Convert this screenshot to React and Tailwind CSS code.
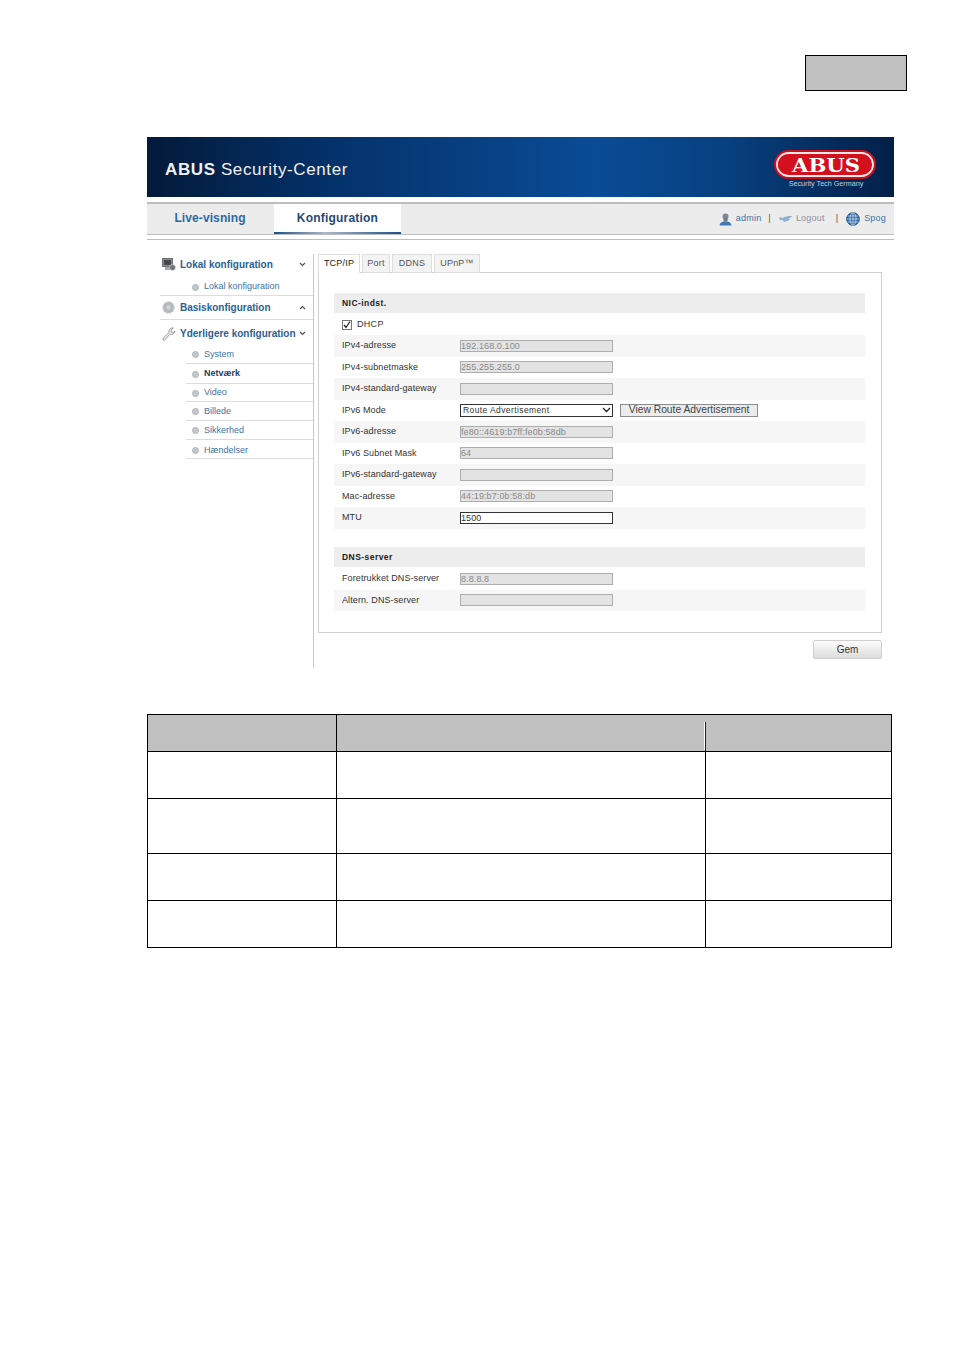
import React from "react";

const Bullet = () => (
  <span className="w-[7px] h-[7px] rounded-full bg-[#c4c8cc] border border-[#aeb3b8] shrink-0" />
);

const Chevron = ({ up }) => (
  <svg width="7" height="5" viewBox="0 0 7 5" className="shrink-0">
    <path d={up ? "M1 4 L3.5 1.5 L6 4" : "M1 1 L3.5 3.5 L6 1"} fill="none" stroke="#555" strokeWidth="1.2" />
  </svg>
);

const MonitorIcon = () => (
  <svg width="14" height="13" viewBox="0 0 14 13" className="shrink-0">
    <rect x="0.5" y="0.5" width="10" height="8" fill="#8a8f96" stroke="#6a6e73" />
    <rect x="2" y="2" width="7" height="5" fill="#45494d" />
    <rect x="3" y="9" width="6" height="3" fill="#a5a9ae" />
    <circle cx="10.5" cy="9.5" r="3" fill="#70767c" stroke="#e6e6e6" strokeWidth="0.6" />
  </svg>
);

const GearIcon = () => (
  <svg width="13" height="13" viewBox="0 0 13 13" className="shrink-0">
    <circle cx="6.5" cy="6.5" r="5.6" fill="#b4b7ba" stroke="#c8cacc" strokeDasharray="2 1" strokeWidth="1.4" />
    <circle cx="6.5" cy="6.5" r="2.4" fill="#cfd1d3" />
  </svg>
);

const WrenchIcon = () => (
  <svg width="14" height="14" viewBox="0 0 14 14" className="shrink-0">
    <path
      d="M1 13 L2.5 13.2 L8 7.2 C10 8 12.6 6.8 13 4 L11 5.6 L9 4.6 L9.4 2.4 L11.4 1 C8.6 0.4 6.4 3 7 5.6 L1 11.4 Z"
      fill="#f0f0f0"
      stroke="#8d9094"
      strokeWidth="0.9"
    />
  </svg>
);

const UserIcon = () => (
  <svg width="13" height="13" viewBox="0 0 13 13" className="shrink-0">
    <circle cx="6.5" cy="3.5" r="3" fill="#7b8794" />
    <rect x="4.5" y="5.5" width="4" height="3" fill="#6b7683" />
    <path d="M0.5 12.5 C1 9 3.5 8.5 6.5 8.5 C9.5 8.5 12 9 12.5 12.5 Z" fill="#3f78b5" />
  </svg>
);

const LogoutIcon = () => (
  <svg width="14" height="8" viewBox="0 0 14 8" className="shrink-0">
    <path d="M0.5 2 L4 3 C6 1.5 8 1 13.5 1 L10 3.5 L11 5 L5 7 L3.5 5 L0.5 5 Z" fill="#8fb0d2" />
  </svg>
);

const GlobeIcon = () => (
  <svg width="14" height="14" viewBox="0 0 14 14" className="shrink-0">
    <circle cx="7" cy="7" r="6.3" fill="#2f68a8" stroke="#1d4a80" />
    <ellipse cx="7" cy="7" rx="3" ry="6.3" fill="none" stroke="#d4e2f0" strokeWidth="0.7" />
    <path d="M0.7 7 H13.3 M1.6 4 H12.4 M1.6 10 H12.4 M7 0.7 V13.3" stroke="#d4e2f0" strokeWidth="0.7" />
  </svg>
);

const AbusLogo = () => (
  <svg width="106" height="42" viewBox="0 0 106 42" className="block">
    <rect x="1" y="4" width="102" height="29" rx="14.5" fill="#c8101d" />
    <rect x="4" y="7" width="96" height="23" rx="11.5" fill="#d3111e" stroke="#f6e9e9" strokeWidth="1.8" />
    <text
      x="53"
      y="26"
      textAnchor="middle"
      fontFamily="'DejaVu Serif', serif"
      fontWeight="700"
      fontSize="19"
      fill="#fff"
      textLength="68"
      lengthAdjust="spacingAndGlyphs"
    >
      ABUS
    </text>
    <text x="53" y="39.5" textAnchor="middle" fontFamily="'Liberation Sans', sans-serif" fontSize="7.2" fill="#c5cdd8">
      Security Tech Germany
    </text>
  </svg>
);

const Side = ({ icon, label, up }) => (
  <div className="flex items-center h-full pl-[15px] pr-[7px]">
    <span className="w-[18px] flex justify-start shrink-0">{icon}</span>
    <span className="flex-1 text-[10px] font-bold text-[#2c5f94] whitespace-nowrap">{label}</span>
    <Chevron up={up} />
  </div>
);

const SubItem = ({ label, bold, line = true, h = "h-[19px]", pt = "pt-px" }) => (
  <div className={`ml-[39px] ${h} ${pt} flex items-center gap-[5px] pl-[6px] ${line ? "border-b border-[#dcdcdc]" : ""}`}>
    <Bullet />
    <span className={`text-[9px] ${bold ? "font-bold text-[#1e3f66]" : "text-[#3f72a8]"}`}>{label}</span>
  </div>
);

const Sidebar = () => (
  <div className="w-[167px] h-[414px] border-r border-[#c8c8c8] shrink-0">
    <div className="h-[22px] pb-[2px]">
      <Side icon={<MonitorIcon />} label="Lokal konfiguration" />
    </div>
    <SubItem label="Lokal konfiguration" line={false} pt="pt-[3px]" />
    <div className="ml-[13px] h-[25px] border-t border-b border-[#dcdcdc]">
      <div className="-ml-[13px] h-full">
        <Side icon={<GearIcon />} label="Basiskonfiguration" up />
      </div>
    </div>
    <div className="h-[25px] pt-[2px]">
      <Side icon={<WrenchIcon />} label="Yderligere konfiguration" />
    </div>
    <SubItem label="System" />
    <SubItem label="Netværk" bold h="h-[20px]" />
    <SubItem label="Video" h="h-[18px]" />
    <SubItem label="Billede" />
    <SubItem label="Sikkerhed" />
    <SubItem label="Hændelser" pt="pt-[3px]" />
  </div>
);

const Tab = ({ label, active, width }) => (
  <div
    className={`h-[19px] flex items-center justify-center text-[9px] tracking-[0.2px] border border-[#dedede] ${width} ${
      active ? "bg-white border-b-white text-[#222] relative z-10" : "bg-[#f3f3f3] text-[#555]"
    }`}
  >
    {label}
  </div>
);

const Field = ({ value = "" }) => (
  <input
    readOnly
    value={value}
    className="w-[153px] h-[12px] bg-[#e3e3e3] border border-[#adadad] pl-0 text-[9px] tracking-[0.1px] text-[#8a8a8a] leading-none outline-none"
  />
);

const Row = ({ label, gray, children }) => (
  <div className={`h-[21.5px] flex items-center pl-2 ${gray ? "bg-[#f6f6f6]" : ""}`}>
    <span className="w-[118px] text-[9px] tracking-[0.1px] text-[#333] whitespace-nowrap">{label}</span>
    {children}
  </div>
);

const SectionHead = ({ label }) => (
  <div className="h-[20px] bg-[#ededed] flex items-center pl-2 text-[8.5px] font-bold tracking-[0.45px] text-[#222]">{label}</div>
);

const Panel = () => (
  <div className="h-[361px] border border-[#cfcfcf] pt-[20px] pl-[15px] pr-[16px]">
    <SectionHead label="NIC-indst." />
    <div className="h-[22px] flex items-center pl-2 pt-[2px] gap-[5px] text-[9px] tracking-[0.3px] text-[#333]">
      <span className="w-[10px] h-[10px] border border-[#777] bg-white flex items-center justify-center">
        <svg width="8" height="8" viewBox="0 0 8 8">
          <path d="M1 4 L3 6.5 L7 0.5" fill="none" stroke="#222" strokeWidth="1.3" />
        </svg>
      </span>
      DHCP
    </div>
    <Row label="IPv4-adresse" gray><Field value="192.168.0.100" /></Row>
    <Row label="IPv4-subnetmaske"><Field value="255.255.255.0" /></Row>
    <Row label="IPv4-standard-gateway" gray><Field /></Row>
    <Row label="IPv6 Mode">
      <div className="w-[153px] h-[13px] border border-[#333] bg-white flex items-center justify-between pl-[2px] pr-[1px] text-[8.5px] tracking-[0.4px] text-[#333]">
        Route Advertisement
        <svg width="9" height="6" viewBox="0 0 9 6">
          <path d="M1 1 L4.5 4.5 L8 1" fill="none" stroke="#222" strokeWidth="1.3" />
        </svg>
      </div>
      <button className="ml-[7px] w-[138px] h-[13px] bg-[#ececec] border border-[#8c8c8c] text-[10.3px] leading-none text-[#444]">
        View Route Advertisement
      </button>
    </Row>
    <Row label="IPv6-adresse" gray><Field value="fe80::4619:b7ff:fe0b:58db" /></Row>
    <Row label="IPv6 Subnet Mask"><Field value="64" /></Row>
    <Row label="IPv6-standard-gateway" gray><Field /></Row>
    <Row label="Mac-adresse"><Field value="44:19:b7:0b:58:db" /></Row>
    <Row label="MTU" gray>
      <input
        readOnly
        value="1500"
        className="w-[153px] h-[12px] bg-white border border-[#333] pl-0 text-[9px] tracking-[0.1px] text-[#333] leading-none outline-none"
      />
    </Row>
    <div className="h-[18.5px]" />
    <SectionHead label="DNS-server" />
    <div className="h-px" />
    <Row label="Foretrukket DNS-server"><Field value="8.8.8.8" /></Row>
    <Row label="Altern. DNS-server" gray><Field /></Row>
  </div>
);

const Cell = ({ w, last, head }) => (
  <div className={`${w} ${last ? "" : "border-r border-black"} ${head ? "bg-[#c0c0c0]" : ""} shrink-0 h-full`} />
);

const TableRow = ({ h, head, last }) => (
  <div className={`flex ${h} ${last ? "" : "border-b border-black"}`}>
    <Cell w="w-[189px]" head={head} />
    {head ? (
      <div className="w-[369px] shrink-0 h-full bg-[#c0c0c0] relative">
        {/* the broken column rule in the header */}
        <span className="absolute right-px top-[7px] bottom-[1px] w-px bg-white" />
        <span className="absolute right-0 top-[7px] bottom-0 w-px bg-[#222]" />
      </div>
    ) : (
      <Cell w="w-[369px]" />
    )}
    <Cell w="flex-1" last head={head} />
  </div>
);

export default function App() {
  return (
    <div className="w-[955px] h-[1350px] bg-white relative font-['Liberation_Sans',Arial,sans-serif] overflow-hidden">
      <div className="pt-[55px] pl-[805px]">
        <div className="w-[102px] h-[36px] bg-[#c0c0c0] border border-black" />
      </div>

      <div className="ml-[147px] mt-[46px] w-[747px]">
        <div className="h-[60px] flex items-center justify-between pl-[18px] pr-[15px] bg-[linear-gradient(90deg,#031a3a_0%,#04326b_25%,#0a4c96_60%,#07407f_78%,#031f47_100%)]">
          <div className="text-[17px] text-[#f0f0f0] tracking-[0.6px] mt-[5px]">
            <span className="font-bold">ABUS</span> Security-Center
          </div>
          <AbusLogo />
        </div>

        <div className="mt-[5px] h-[33px] border-t-2 border-b border-[#bdbdbd] bg-[#ececec] flex items-stretch">
          <div className="w-[127px] flex items-center justify-center pb-[2px] pr-px text-[12px] font-bold text-[#2c6aa6] tracking-[0.1px]">Live-visning</div>
          <div className="w-[127px] bg-white relative flex items-center justify-center pb-[2px] text-[12px] font-bold text-[#1f4a78] tracking-[0.2px]">
            Konfiguration
            <span className="absolute left-0 right-0 bottom-0 h-[2px] bg-[linear-gradient(90deg,#1d4f88,#a9b8c9_40%,#1d4f88)]" />
          </div>
          <div className="flex-1 flex items-center justify-end pr-[8px] text-[9px] tracking-[0.2px] text-[#3f72a8]">
            <UserIcon />
            <span className="ml-[4px]">admin</span>
            <span className="ml-[7px] text-[#555]">|</span>
            <span className="ml-[8px]"><LogoutIcon /></span>
            <span className="ml-[3px] text-[#8a8f96]">Logout</span>
            <span className="ml-[11px] text-[#555]">|</span>
            <span className="ml-[8px]"><GlobeIcon /></span>
            <span className="ml-[4px]">Spog</span>
          </div>
        </div>
        <div className="mt-[4px] h-px bg-[#bdbdbd]" />

        <div className="mt-[14px] flex">
          <Sidebar />
          <div className="ml-[4px] w-[564px]">
            <div className="flex gap-[2px] -mb-px">
              <Tab label="TCP/IP" active width="w-[42px]" />
              <Tab label="Port" width="w-[28px]" />
              <Tab label="DDNS" width="w-[40px]" />
              <Tab label="UPnP™" width="w-[46px]" />
            </div>
            <Panel />
            <div className="mt-[7px] flex justify-end">
              <button className="w-[69px] h-[19px] border border-[#cfcfcf] rounded-[2px] bg-[linear-gradient(180deg,#fdfdfd,#dcdcdc)] text-[10px] text-[#333]">
                Gem
              </button>
            </div>
          </div>
        </div>
      </div>

      <div className="ml-[147px] mt-[46px] w-[745px] h-[234px] border border-black">
        <TableRow h="h-[37px]" head />
        <TableRow h="h-[47px]" />
        <TableRow h="h-[55px]" />
        <TableRow h="h-[47px]" />
        <TableRow h="h-[46px]" last />
      </div>
    </div>
  );
}
